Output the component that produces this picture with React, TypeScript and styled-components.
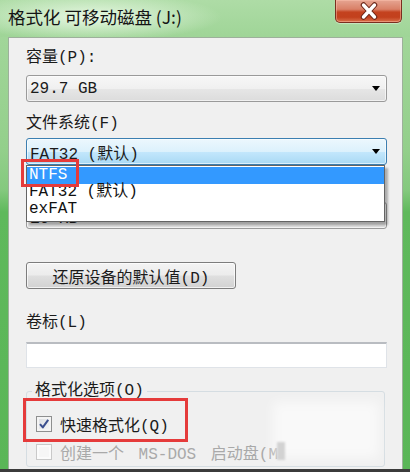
import React from "react";
import styled, { createGlobalStyle } from "styled-components";

const Global = createGlobalStyle`
  html, body { margin: 0; padding: 0; background: #ffffff; }
  body { width: 410px; height: 472px; overflow: hidden; }
  * { box-sizing: border-box; }
`;

const SONG = `"Liberation Mono", "Noto Sans CJK SC", monospace`;

const Window = styled.div`
  width: 410px;
  height: 472px;
  display: flex;
  flex-direction: column;
  overflow: hidden;
  background: linear-gradient(
    to bottom,
    #a6d89e 0px,
    #93cf8b 150px,
    #84c97e 190px,
    #5fb95c 212px,
    #5ab657 100%
  );
`;

const TitleBar = styled.div`
  flex: none;
  height: 37px;
  display: flex;
  align-items: flex-start;
  justify-content: space-between;
  padding: 0 8px 0 8px;
  background:
    radial-gradient(ellipse 130px 24px at 92px 17px, rgba(236, 250, 232, 0.95), rgba(236, 250, 232, 0) 100%),
    linear-gradient(to bottom, #aedca6, #9fd597);
`;

const Title = styled.div`
  font-family: "Noto Sans CJK SC", sans-serif;
  font-size: 17.5px;
  line-height: 33px;
  color: #141414;
  white-space: pre;
`;

const CloseButton = styled.div`
  width: 67px;
  height: 23px;
  display: flex;
  align-items: center;
  justify-content: center;
  border: 1px solid #7a2e1f;
  border-top: none;
  border-radius: 0 0 5px 5px;
  background: linear-gradient(
    to bottom,
    #e6a592 0%,
    #d98067 42%,
    #c4421f 55%,
    #c2401d 78%,
    #d9704a 100%
  );
  box-shadow: inset 0 0 0 1px rgba(255, 200, 180, 0.45), 0 1px 1px rgba(255, 255, 255, 0.4);
`;

const Client = styled.div`
  position: relative;
  flex: 1;
  min-height: 0;
  margin: 0 7px 0 8px;
  background: #f0f0f0;
  border: 1px solid #9db09b;
  border-bottom: none;
  padding: 8px 15px 0 17px;
  overflow: hidden;
  display: flex;
  flex-direction: column;
`;

const BottomBar = styled.div`
  flex: none;
  height: 3px;
  background: #3b3b3b;
`;

const Label = styled.div<{ $mt: number }>`
  margin-top: ${(p) => p.$mt}px;
  height: 24px;
  font-family: ${SONG};
  font-size: 16px;
  line-height: 24px;
  color: #1b1b1b;
  white-space: pre;
`;

const ComboWrap = styled.div<{ $mt: number; $top?: boolean }>`
  position: relative;
  z-index: ${(p) => (p.$top ? 2 : "auto")};
  margin-top: ${(p) => p.$mt}px;
`;

const Combo = styled.div<{ $focus?: boolean }>`
  height: 27px;
  display: flex;
  align-items: center;
  justify-content: space-between;
  padding: 0 6px 0 3px;
  border-radius: 3px;
  font-family: ${SONG};
  font-size: 16px;
  color: #1b1b1b;
  white-space: pre;
  border: 1px solid ${(p) => (p.$focus ? "#3c7fb1" : "#9a9a9a")};
  background: ${(p) =>
    p.$focus
      ? "linear-gradient(to bottom, #ecf7fd 0%, #dcf1fc 50%, #c3e7fc 52%, #a9d9f4 100%)"
      : "linear-gradient(to bottom, #f7f7f7 0%, #f0f0f0 50%, #e6e6e6 52%, #dcdcdc 100%)"};
  box-shadow: inset 0 0 0 1px rgba(255, 255, 255, 0.6);
`;

const Arrow = styled.span`
  width: 0;
  height: 0;
  border-left: 4.5px solid transparent;
  border-right: 4.5px solid transparent;
  border-top: 5px solid #000;
`;

const Popup = styled.div`
  position: absolute;
  top: 100%;
  left: 0;
  right: 2px;
  z-index: 2;
  background: #ffffff;
  border: 1px solid #646464;
  padding: 1px 0 3px 0;
  box-shadow: 3px 3px 2px rgba(0, 0, 0, 0.28);
`;

const Option = styled.div<{ $active?: boolean }>`
  position: relative;
  height: 17px;
  line-height: 17px;
  padding-left: 2px;
  font-family: ${SONG};
  font-size: 16px;
  white-space: pre;
  color: ${(p) => (p.$active ? "#ffffff" : "#111111")};
  background: ${(p) => (p.$active ? "#3399ff" : "transparent")};
`;

const Mark = styled.div<{ $l: number; $t: number; $w: number; $h: number }>`
  position: absolute;
  left: ${(p) => p.$l}px;
  top: ${(p) => p.$t}px;
  width: ${(p) => p.$w}px;
  height: ${(p) => p.$h}px;
  border: 3px solid #e53b3b;
  pointer-events: none;
  z-index: 3;
`;

const Spacer = styled.div<{ $mt: number; $h: number }>`
  margin-top: ${(p) => p.$mt}px;
  height: ${(p) => p.$h}px;
`;

const HiddenValue = styled.span`
  position: relative;
  top: 3px;
`;

const Button = styled.div<{ $mt: number }>`
  margin-top: ${(p) => p.$mt}px;
  width: 210px;
  height: 27px;
  display: flex;
  align-items: center;
  justify-content: center;
  border: 1px solid #7d7d7d;
  border-radius: 3px;
  background: linear-gradient(to bottom, #f4f4f4 0%, #ececec 48%, #dfdfdf 52%, #d2d2d2 100%);
  box-shadow: inset 0 0 0 1px rgba(255, 255, 255, 0.7);
  font-family: ${SONG};
  font-size: 16px;
  color: #1b1b1b;
  white-space: pre;
`;

const TextBox = styled.div<{ $mt: number }>`
  margin-top: ${(p) => p.$mt}px;
  height: 26px;
  background: #ffffff;
  border: 1px solid #dfe3e8;
  border-top: 2px solid #b9bcc1;
`;

const Group = styled.fieldset`
  margin: 14px 2px 0 0;
  min-width: 0;
  padding: 10px 9px 0 9px;
  border: 1px solid #d5dde2;
  border-radius: 3px;
`;

const Legend = styled.legend`
  margin-left: -4px;
  padding: 0 3px;
  font-family: ${SONG};
  font-size: 16px;
  line-height: 18px;
  color: #1b1b1b;
  white-space: pre;
`;

const CheckRow = styled.div<{ $disabled?: boolean }>`
  position: relative;
  height: 28px;
  display: flex;
  align-items: center;
  gap: 8px;
  font-family: ${SONG};
  font-size: 16px;
  white-space: pre;
  word-spacing: ${(p) => (p.$disabled ? "5px" : "0")};
  color: ${(p) => (p.$disabled ? "#a9a9a9" : "#1b1b1b")};
`;

const Box = styled.span<{ $disabled?: boolean }>`
  flex: none;
  width: 16px;
  height: 16px;
  display: flex;
  align-items: center;
  justify-content: center;
  border: 1px solid ${(p) => (p.$disabled ? "#c9c9c9" : "#8e8f8f")};
  background: ${(p) =>
    p.$disabled ? "#f6f6f6" : "linear-gradient(135deg, #d9dce1 0%, #f7f7f7 100%)"};
  box-shadow: inset 0 0 0 2px ${(p) => (p.$disabled ? "#fbfbfb" : "#f4f4f4")};
`;

const Haze = styled.div`
  position: absolute;
  left: 264px;
  top: 364px;
  width: 106px;
  height: 56px;
  background: rgba(255, 255, 255, 0.6);
  filter: blur(6px);
  pointer-events: none;
  z-index: 2;
`;

const Smudge = styled.div`
  position: absolute;
  left: 268px;
  top: 404px;
  width: 8px;
  height: 18px;
  background: #d2d2d2;
  filter: blur(1px);
  pointer-events: none;
  z-index: 2;
`;

function CloseIcon() {
  return (
    <svg width="20" height="18" viewBox="0 0 20 18">
      <path d="M4.5 3 L15.5 15 M15.5 3 L4.5 15" stroke="#6a2416" strokeWidth="5.5" strokeLinecap="round" fill="none" />
      <path d="M4.5 3 L15.5 15 M15.5 3 L4.5 15" stroke="#ffffff" strokeWidth="3.4" strokeLinecap="round" fill="none" />
    </svg>
  );
}

function CheckIcon() {
  return (
    <svg width="12" height="12" viewBox="0 0 12 12">
      <path d="M2 6.2 L4.8 9.4 L10.2 1.8" stroke="#3b4f8e" strokeWidth="2" fill="none" strokeLinejoin="round" />
    </svg>
  );
}

export default function App() {
  return (
    <>
      <Global />
      <Window>
        <TitleBar>
          <Title>格式化 可移动磁盘 (J:)</Title>
          <CloseButton>
            <CloseIcon />
          </CloseButton>
        </TitleBar>
        <Client>
          <Label $mt={0}>容量(P):</Label>
          <ComboWrap $mt={5}>
            <Combo>
              <span>29.7 GB</span>
              <Arrow />
            </Combo>
          </ComboWrap>
          <Label $mt={10}>文件系统(F)</Label>
          <ComboWrap $mt={2} $top>
            <Combo $focus>
              <span>FAT32 (默认)</span>
              <Arrow />
            </Combo>
            <Popup>
              <Option $active>
                NTFS
                <Mark $l={-6} $t={-8} $w={58} $h={28} />
              </Option>
              <Option>FAT32 (默认)</Option>
              <Option>exFAT</Option>
            </Popup>
          </ComboWrap>
          <Spacer $mt={10} $h={24} />
          <ComboWrap $mt={3}>
            <Combo>
              <HiddenValue>16 KB</HiddenValue>
              <Arrow />
            </Combo>
          </ComboWrap>
          <Button $mt={33}>还原设备的默认值(D)</Button>
          <Label $mt={22}>卷标(L)</Label>
          <TextBox $mt={7} />
          <Group>
            <Legend>格式化选项(O)</Legend>
            <CheckRow>
              <Box>
                <CheckIcon />
              </Box>
              快速格式化(Q)
              <Mark $l={-13} $t={-12} $w={165} $h={44} />
            </CheckRow>
            <CheckRow $disabled>
              <Box $disabled />
              创建一个 MS-DOS 启动盘(M
            </CheckRow>
          </Group>
          <Haze />
          <Smudge />
        </Client>
        <BottomBar />
      </Window>
    </>
  );
}
